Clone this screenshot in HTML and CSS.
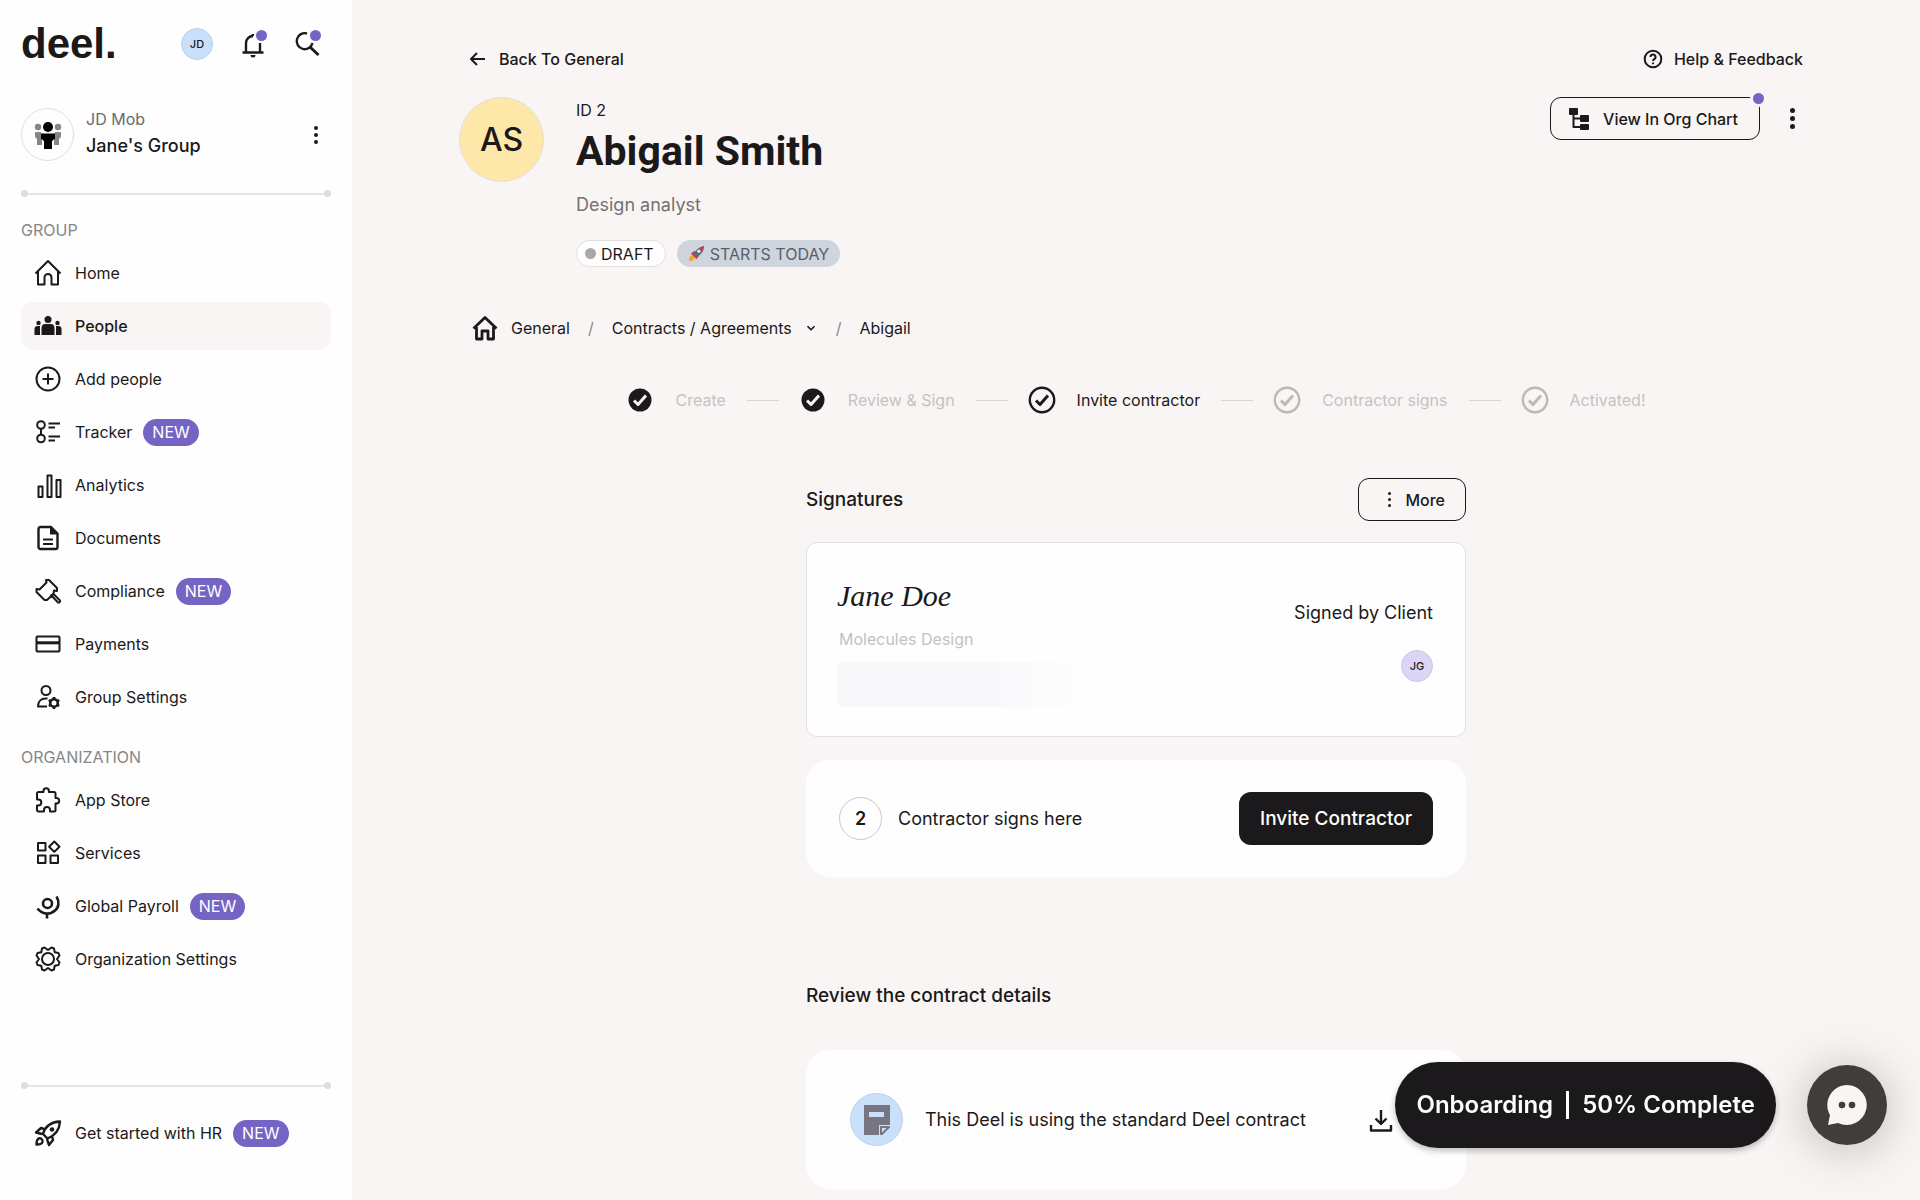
FILE: index.html
```html
<!DOCTYPE html>
<html lang="en">
<head>
    <meta charset="UTF-8">
    <meta name="viewport" content="width=device-width, initial-scale=1.0">
    <title>Abigail Smith - Deel</title>
    <link rel="stylesheet" href="styles.css">
</head>
<body>
    <aside class="sidebar">
        <header class="topbar">
            <a class="logo" href="#">deel.</a>
            <button class="avatar avatar-blue" type="button">JD</button>
            <button class="icon-btn" type="button" aria-label="Notifications">
                <svg class="icon" viewBox="0 0 28 28"><path d="M14 4v2M7 22v-9a7 7 0 0 1 7-7M21 22v-9M3.500 22.500h21" stroke-width="2.400"/><path d="M11.500 25h5a2.500 2.500 0 0 1-5 0z" class="solid"/></svg>
                <span class="dot"></span>
            </button>
            <button class="icon-btn" type="button" aria-label="Search">
                <svg class="icon" viewBox="0 0 28 28"><path d="M14 3.500a8 8 0 1 0 5.500 9.500" stroke-width="2.400"/><path d="M17 17l8.500 8" stroke-width="3"/></svg>
                <span class="dot"></span>
            </button>
        </header>

        <div class="group">
            <span class="group-logo">
                <svg class="icon" viewBox="0 0 28 28"><g class="muted"><circle cx="4" cy="6" r="3.200"/><circle cx="24" cy="6" r="3.200"/><path d="M1 11h6l1 6v7H3v-6l-2-2zM27 11h-6l-1 6v7h5v-6l2-2z"/></g><g class="solid"><circle cx="14" cy="6" r="5"/><path d="M7 12.500h14v5l-3 2.500v8h-8v-8l-3-2.500z"/></g></svg>
            </span>
            <div class="group-text">
                <span class="group-org">JD Mob</span>
                <span class="group-name">Jane's Group</span>
            </div>
            <button class="kebab" type="button" aria-label="Group menu"><i></i><i></i><i></i></button>
        </div>

        <div class="divider"></div>

        <h2 class="nav-title">GROUP</h2>
        <nav class="nav">
            <a class="nav-item" href="#">
                <svg class="icon" viewBox="0 0 28 28"><path d="M1.500 14.500L14 2l12.500 12.500M4 12.500V25.500h6.500v-7a3.500 3.500 0 0 1 7 0v7H24V12.500"/></svg>
                Home
            </a>
            <a class="nav-item active" href="#">
                <svg class="icon" viewBox="0 0 28 28"><g class="solid"><circle cx="14" cy="7.500" r="3.500"/><circle cx="4.500" cy="11" r="2.200"/><circle cx="23.500" cy="11" r="2.200"/><path d="M7.500 23v-7a4 4 0 0 1 4-4h5a4 4 0 0 1 4 4v7zM.5 23v-6a3 3 0 0 1 3-3h2.500v9zM27.500 23v-6a3 3 0 0 0-3-3H22v9z"/></g></svg>
                People
            </a>
            <a class="nav-item" href="#">
                <svg class="icon" viewBox="0 0 28 28"><circle cx="14" cy="14" r="11.500"/><path d="M14 8.500v11M8.500 14h11"/></svg>
                Add people
            </a>
            <a class="nav-item" href="#">
                <svg class="icon" viewBox="0 0 28 28"><circle cx="7" cy="7" r="3.800"/><circle cx="7" cy="20.500" r="3.800"/><path d="M7 11v5.500M14.500 5.500h11.500M14.500 9.500h6.500M14.500 18.500h11.500M14.500 22.500h6.500"/></svg>
                Tracker <span class="badge">NEW</span>
            </a>
            <a class="nav-item" href="#">
                <svg class="icon" viewBox="0 0 28 28"><path d="M4.500 15.500h4V26h-4zM13.500 4.500h4V26h-4zM22.500 9h4v17h-4z"/></svg>
                Analytics
            </a>
            <a class="nav-item" href="#">
                <svg class="icon" viewBox="0 0 28 28"><path d="M6.500 3H17l6.500 6.500V23a2 2 0 0 1-2 2h-15a2 2 0 0 1-2-2V5a2 2 0 0 1 2-2z" stroke-width="2.400"/><path class="solid" d="M16 3v7.500h7.500z"/><path d="M9 15.500h10M9 20h10"/></svg>
                Documents
            </a>
            <a class="nav-item" href="#">
                <svg class="icon" viewBox="0 0 28 28"><path d="M12 3l3 0 8 8v3l-3-.5-.5 3.500-6.500 6-2.500 0L2.500 15v-3l3 .5 7-7zM16.500 17.500l7.500 8c1.500.5 2.500-1 2-2l-7.500-7.500"/></svg>
                Compliance <span class="badge">NEW</span>
            </a>
            <a class="nav-item" href="#">
                <svg class="icon" viewBox="0 0 28 28"><rect x="2.500" y="6.500" width="23" height="15" rx="1"/><path d="M2.500 12.800h23" stroke-width="3"/></svg>
                Payments
            </a>
            <a class="nav-item" href="#">
                <svg class="icon" viewBox="0 0 28 28"><circle cx="12" cy="7.500" r="4.500"/><path d="M13 23.500H4c0-5 3-8 7.500-8h2"/><circle cx="20" cy="20" r="3.800" stroke-width="2.600"/><path d="M20 14v2M20 24v2M14.800 17l1.700 1M23.500 22l1.700 1M14.800 23l1.700-1M23.500 18l1.700-1" stroke-width="2.600"/></svg>
                Group Settings
            </a>
        </nav>

        <h2 class="nav-title">ORGANIZATION</h2>
        <nav class="nav">
            <a class="nav-item" href="#">
                <svg class="icon" viewBox="0 0 28 28"><path d="M4.500 6H9.500V5a2.700 2.700 0 0 1 5.400 0v1H20a1.500 1.500 0 0 1 1.500 1.500V12h1a2.700 2.700 0 0 1 0 5.400h-1v7a1 1 0 0 1-1 1h-4.500V24a3 3 0 0 0-6 0v1.400H4.500a1.500 1.500 0 0 1-1.500-1.500V19.500h1.300a3 3 0 0 0 0-6H3V7.500A1.500 1.500 0 0 1 4.500 6z"/></svg>
                App Store
            </a>
            <a class="nav-item" href="#">
                <svg class="icon" viewBox="0 0 28 28"><path d="M4 4h7.500v7.500H4zM4 16.500h7.500V24H4zM16.500 16.500H24V24h-7.500zM20.300 2.500l5.200 5.200-5.200 5.200-5.200-5.200z"/></svg>
                Services
            </a>
            <a class="nav-item" href="#">
                <svg class="icon" viewBox="0 0 28 28"><circle cx="13.500" cy="11.500" r="4.500" stroke-width="2.600"/><path d="M22.500 4.500c3 5 2.500 11-1.500 14-5 4.500-13 4-17.500-2M13 21.500v5" stroke-width="2.600"/></svg>
                Global Payroll <span class="badge">NEW</span>
            </a>
            <a class="nav-item" href="#">
                <svg class="icon" viewBox="0 0 28 28"><circle cx="14" cy="14" r="6"/><path d="M10.500 2.500L14 5l3.500-2.500 2.500 1 .7 3.800 3.800.7 1 2.500L23 14l2.500 3.500-1 2.500-3.800.7-.7 3.800-2.500 1L14 23l-3.500 2.500-2.500-1-.7-3.800-3.800-.7-1-2.500L5 14l-2.500-3.500 1-2.500 3.800-.7.7-3.800z"/></svg>
                Organization Settings
            </a>
        </nav>

        <footer class="sidebar-foot">
            <div class="divider"></div>
            <a class="nav-item" href="#">
                <svg class="icon" viewBox="0 0 28 28"><g stroke-width="2.400"><path d="M9 15c2-7 7-12 17-12.500C25.500 11 21 16.500 13.500 19.500zM11.500 10.500L7 9l-5 4.500 6 1.500M18 17l1 4-4 5-2-6M4.500 19.500C2.500 21 2.500 25 2.500 25.500c3 0 5.500-.5 6-2.500.5-2.500-2-4.500-4-3.500z"/></g><circle class="solid" cx="18" cy="10.500" r="2.300"/></svg>
                Get started with HR <span class="badge">NEW</span>
            </a>
        </footer>
    </aside>

    <main class="main">
        <div class="page-bar">
            <a class="page-link" href="#">
                <svg class="icon-sm" viewBox="0 0 20 20"><path d="M17 10H3M9 4l-6 6 6 6"/></svg>
                Back To General
            </a>
            <a class="page-link" href="#">
                <svg class="icon-sm" viewBox="0 0 20 20"><circle cx="10" cy="10" r="8.300"/><path d="M7.500 8a2.500 2.500 0 1 1 3.700 2.200c-.8.5-1.200.8-1.200 1.800M10 13.500v1.700"/></svg>
                Help &amp; Feedback
            </a>
        </div>

        <section class="profile">
            <div class="profile-pic">AS</div>
            <div class="profile-info">
                <span class="profile-id">ID 2</span>
                <h1 class="profile-name">Abigail Smith</h1>
                <p class="profile-role">Design analyst</p>
                <div class="tags">
                    <span class="tag tag-draft"><i class="tag-dot"></i>DRAFT</span>
                    <span class="tag tag-start">
                        <svg class="rocket" viewBox="0 0 18 18"><path d="M1 17c0-4 1-6 4-6l2 2c0 3-2 4-6 4z" fill="#f6a623"/><path d="M3 9l4-3 2 2-3 4zM9 15l3-4-2-2-4 3z" fill="#d63a3a"/><path d="M6 11c1-5 5-9 11-10 0 6-4 10-9 12z" fill="#5b6b80"/><path d="M12 4l5-3-2 6z" fill="#d63a3a"/><circle cx="11.500" cy="6.500" r="1.700" fill="#e8f1fb"/></svg>
                        STARTS TODAY
                    </span>
                </div>
            </div>
            <div class="profile-actions">
                <button class="btn-outline" type="button">
                    <svg class="icon-org" viewBox="0 0 24 24"><g class="solid"><rect x="2" y="1" width="9" height="7" rx="1"/><rect x="13" y="8" width="9" height="7" rx="1"/><rect x="13" y="17" width="9" height="6" rx="1"/></g><path d="M6.500 7v13h8M6.500 11.500h8"/></svg>
                    View In Org Chart
                    <span class="dot dot-corner"></span>
                </button>
                <button class="kebab kebab-lg" type="button" aria-label="More actions"><i></i><i></i><i></i></button>
            </div>
        </section>

        <nav class="crumbs">
            <a class="crumb" href="#">
                <svg class="icon" viewBox="0 0 28 28"><path d="M2.500 14.500L14 3.500l11.500 11M5.500 13v12h5.500v-8h6v8h5.500V13" stroke-width="2.800"/></svg>
                General
            </a>
            <span class="slash">/</span>
            <a class="crumb" href="#">
                Contracts / Agreements
                <svg class="chevron" viewBox="0 0 12 12"><path d="M3 4.500l3 3 3-3"/></svg>
            </a>
            <span class="slash">/</span>
            <a class="crumb" href="#">Abigail</a>
        </nav>

        <ol class="steps">
            <li class="step">
                <svg class="icon" viewBox="0 0 28 28"><circle class="solid" cx="14" cy="14" r="11.500"/><path class="tick-light" d="M8 14.500l4 4 8-9"/></svg>
                Create
            </li>
            <li class="step">
                <svg class="icon" viewBox="0 0 28 28"><circle class="solid" cx="14" cy="14" r="11.500"/><path class="tick-light" d="M8 14.500l4 4 8-9"/></svg>
                Review &amp; Sign
            </li>
            <li class="step current">
                <svg class="icon" viewBox="0 0 28 28"><circle cx="14" cy="14" r="12.200" stroke-width="2.400"/><path d="M8 14.500l4 4 8-9" stroke-width="3"/></svg>
                Invite contractor
            </li>
            <li class="step todo">
                <svg class="icon" viewBox="0 0 28 28"><circle cx="14" cy="14" r="12.200" stroke-width="2.400"/><path d="M8 14.500l4 4 8-9" stroke-width="3"/></svg>
                Contractor signs
            </li>
            <li class="step todo">
                <svg class="icon" viewBox="0 0 28 28"><circle cx="14" cy="14" r="12.200" stroke-width="2.400"/><path d="M8 14.500l4 4 8-9" stroke-width="3"/></svg>
                Activated!
            </li>
        </ol>

        <div class="column">
            <div class="section-head">
                <h3 class="section-title">Signatures</h3>
                <button class="btn-outline btn-more" type="button">
                    <span class="kebab kebab-sm"><i></i><i></i><i></i></span>
                    More
                </button>
            </div>

            <div class="card card-signed">
                <div class="signer">
                    <span class="signature">Jane Doe</span>
                    <span class="signer-org">Molecules Design</span>
                    <span class="redacted"></span>
                </div>
                <div class="signed-by">
                    <span>Signed by Client</span>
                    <span class="avatar avatar-lilac">JG</span>
                </div>
            </div>

            <div class="card card-invite">
                <span class="step-number">2</span>
                <span class="card-text">Contractor signs here</span>
                <button class="btn-dark" type="button">Invite Contractor</button>
            </div>

            <h3 class="section-title review-title">Review the contract details</h3>
            <div class="card card-contract">
                <span class="doc-icon">
                    <svg class="doc" viewBox="0 0 26 30"><path d="M0 0h26v20h-11v10H0z" fill="#77757f"/><path d="M5 7h15v5H5z" fill="#cbdff8"/><path d="M17 22h8l-8 8z" fill="#cbdff8" stroke="#77757f"/></svg>
                </span>
                <span class="card-text">This Deel is using the standard Deel contract</span>
                <button class="icon-btn" type="button" aria-label="Download contract">
                    <svg class="icon" viewBox="0 0 28 28"><path d="M14 4v14M8.500 12.500L14 18l5.500-5.500M4 19v5.500h20V19" stroke-width="2.400"/></svg>
                </button>
            </div>
        </div>
    </main>

    <div class="floating">
        <button class="onboarding" type="button">Onboarding <span class="bar"></span> 50% Complete</button>
        <button class="chat" type="button" aria-label="Open chat">
            <svg class="chat-icon" viewBox="0 0 42 42"><path d="M21 1a20 20 0 1 1-9 38l-10 2 2-10A20 20 0 0 1 21 1z" fill="#f9f5f4"/><circle cx="16" cy="21" r="3.300" fill="#423d3d"/><circle cx="26" cy="21" r="3.300" fill="#423d3d"/></svg>
        </button>
    </div>
</body>
</html>
```

FILE: styles.css
```css
* {
    box-sizing: border-box;
}
body {
    margin: 0;
    display: flex;
    min-height: 100vh;
    font-family: Inter, "Liberation Sans", sans-serif;
    font-size: 16px;
    line-height: 24px;
    color: #1b1919;
    background-color: #f9f5f4;
}
a {
    color: inherit;
    text-decoration: none;
}
button {
    font: inherit;
    color: inherit;
    background: none;
    border: 0;
    padding: 0;
    cursor: pointer;
}
h1, h2, h3, p, ol {
    margin: 0;
    padding: 0;
}

/* icons */
svg {
    fill: none;
    stroke: currentColor;
    stroke-width: 2;
    stroke-linejoin: round;
    flex: none;
    display: block;
}
.icon {
    width: 28px;
    height: 28px;
}
.icon-sm {
    width: 20px;
    height: 20px;
}
.icon-org {
    width: 24px;
    height: 24px;
}
.solid {
    fill: currentColor;
    stroke: none;
}
.muted {
    fill: #868686;
    stroke: none;
}
.icon-btn {
    position: relative;
    width: 28px;
    height: 28px;
}
.dot {
    position: absolute;
    top: 0;
    right: 0;
    width: 11px;
    height: 11px;
    border-radius: 50%;
    background-color: #7564c4;
    box-shadow: 0 0 0 2px #fefefe;
}
.kebab {
    display: flex;
    flex-direction: column;
    align-items: center;
    justify-content: center;
    gap: 3px;
    width: 28px;
    height: 28px;
}
.kebab i {
    width: 4px;
    height: 4px;
    border-radius: 50%;
    background-color: currentColor;
}
.avatar {
    display: flex;
    align-items: center;
    justify-content: center;
    width: 32px;
    height: 32px;
    border-radius: 50%;
    font-size: 11px;
    font-weight: 500;
}
.avatar-blue {
    background-color: #c9e0fb;
    border: 1px solid #bcd0ea;
}
.avatar-lilac {
    background-color: #dcd6f6;
    border: 1px solid #cdc6e6;
}

/* sidebar */
.sidebar {
    position: sticky;
    top: 0;
    flex: none;
    display: flex;
    flex-direction: column;
    width: 352px;
    height: 100vh;
    padding: 20px 21px 43px;
    background-color: #fefefe;
}
.topbar {
    display: flex;
    align-items: center;
    gap: 26px;
    height: 48px;
    padding-right: 10px;
}
.logo {
    flex: 1;
    font-family: "Liberation Sans", sans-serif;
    font-size: 42px;
    font-weight: 700;
    line-height: 48px;
}
.group {
    display: flex;
    align-items: center;
    gap: 12px;
    height: 53px;
    margin-top: 40px;
    padding-right: 1px;
}
.group-logo {
    display: flex;
    align-items: center;
    justify-content: center;
    width: 53px;
    height: 53px;
    border: 1px solid #dfdde2;
    border-radius: 50%;
    color: #000;
}
.group-text {
    flex: 1;
    display: flex;
    flex-direction: column;
    padding-bottom: 4px;
}
.group-org {
    line-height: 26px;
    color: #6b6b6b;
}
.group-name {
    font-size: 18px;
    font-weight: 500;
    line-height: 28px;
}
.divider {
    display: flex;
    align-items: center;
    justify-content: space-between;
    height: 7px;
    background: linear-gradient(#e5e3e6, #e5e3e6) center / 100% 2px no-repeat;
}
.divider::before, .divider::after {
    content: "";
    width: 7px;
    height: 7px;
    border-radius: 50%;
    background-color: #dedce0;
}
.group + .divider {
    margin-top: 29px;
}
.nav-title {
    margin-top: 24px;
    font-size: 16px;
    font-weight: 400;
    line-height: 24px;
    color: #868686;
}
.divider + .nav-title {
    margin-top: 21px;
}
.nav {
    display: flex;
    flex-direction: column;
    gap: 5px;
    margin-top: 7px;
}
.nav-item {
    display: flex;
    align-items: center;
    gap: 11px;
    height: 48px;
    padding-left: 13px;
    border-radius: 12px;
}
.nav-item .icon {
    margin-right: 2px;
}
.nav-item.active {
    font-weight: 500;
    background-color: #f9f5f4;
}
.badge {
    padding: 0 9px;
    border-radius: 14px;
    line-height: 27px;
    color: #fff;
    background-color: #7564c4;
}
.sidebar-foot {
    display: flex;
    flex-direction: column;
    gap: 20px;
    margin-top: auto;
}

/* page header */
.main {
    flex: 1;
    min-width: 0;
    padding: 47px 107px 12px;
}
.page-bar {
    display: flex;
    justify-content: space-between;
    padding: 0 10px 0 9px;
}
.page-link {
    display: flex;
    align-items: center;
    gap: 11px;
    font-weight: 500;
}
.profile {
    display: flex;
    align-items: flex-start;
    gap: 32px;
    margin-top: 26px;
}
.profile-pic {
    display: flex;
    align-items: center;
    justify-content: center;
    width: 85px;
    height: 85px;
    border: 1px solid #e4dfd8;
    border-radius: 50%;
    font-size: 32px;
    font-weight: 500;
    background-color: #fee8a9;
}
.profile-info {
    flex: 1;
    display: flex;
    flex-direction: column;
}
.profile-id {
    line-height: 26px;
}
.profile-name {
    font-family: Roboto, "Liberation Sans", sans-serif;
    font-size: 41px;
    font-weight: 700;
    line-height: 56px;
}
.profile-role {
    margin-top: 12px;
    font-size: 18px;
    line-height: 28px;
    color: #757171;
}
.tags {
    display: flex;
    gap: 11px;
    margin-top: 21px;
}
.tag {
    display: flex;
    align-items: center;
    height: 27px;
    padding: 0 11px;
    border-radius: 14px;
}
.tag-draft {
    gap: 5px;
    padding: 0 11px 0 8px;
    border: 1px solid #e2dfe0;
    background-color: #fefefe;
}
.tag-dot {
    width: 11px;
    height: 11px;
    border-radius: 50%;
    background-color: #a9a7a7;
}
.tag-start {
    gap: 5px;
    color: #565f6e;
    background-color: #cfd5dc;
}
.rocket {
    width: 17px;
    height: 17px;
    stroke: none;
}
.profile-actions {
    display: flex;
    align-items: center;
    gap: 11px;
}
.btn-outline {
    position: relative;
    display: flex;
    align-items: center;
    gap: 12px;
    height: 43px;
    padding: 0 21px 0 16px;
    border: 1px solid #1b1919;
    border-radius: 11px;
    font-weight: 500;
}
.dot-corner {
    top: -5px;
    right: -5px;
    box-shadow: 0 0 0 3px #f9f5f4;
}
.kebab-lg {
    width: 42px;
    height: 42px;
}
.kebab-lg i {
    width: 5px;
    height: 5px;
}
.crumbs {
    display: flex;
    align-items: center;
    gap: 18px;
    height: 30px;
    margin-top: 46px;
    padding-left: 12px;
}
.crumb {
    display: flex;
    align-items: center;
    gap: 12px;
}
.slash {
    color: #8c8888;
}
.chevron {
    width: 14px;
    height: 14px;
    stroke-width: 1.5;
}

/* progress */
.steps {
    display: flex;
    justify-content: center;
    gap: 20px;
    margin-top: 43px;
    list-style: none;
}
.step {
    display: flex;
    align-items: center;
    gap: 21px;
    color: #c6c2c2;
}
.step:not(:last-child)::after {
    content: "";
    width: 32px;
    height: 1px;
    background-color: #d9d5d5;
}
.step .icon {
    color: #1b1919;
}
.step.current {
    color: #1b1919;
}
.step.todo .icon {
    color: #bdb9b9;
}
.tick-light {
    stroke: #f9f5f4;
    stroke-width: 3;
}

/* contract column */
.column {
    max-width: 660px;
    margin: 64px auto 0;
}
.section-head {
    display: flex;
    align-items: center;
    justify-content: space-between;
}
.section-title {
    font-size: 19px;
    font-weight: 500;
    line-height: 28px;
}
.btn-more {
    gap: 2px;
    padding: 0 20px 0 16px;
}
.kebab-sm i {
    width: 3px;
    height: 3px;
}
.card {
    display: flex;
    border-radius: 24px;
    background-color: #fefefe;
    font-size: 18px;
}
.card-signed {
    justify-content: space-between;
    margin-top: 21px;
    padding: 31px 32px 29px 30px;
    border: 1px solid #e3e0e3;
    border-radius: 11px;
}
.signer {
    display: flex;
    flex-direction: column;
}
.signature {
    font-family: "Liberation Serif", serif;
    font-size: 30px;
    font-style: italic;
    line-height: 44px;
}
.signer-org {
    margin-top: 8px;
    padding-left: 2px;
    font-size: 16px;
    line-height: 26px;
    color: #c4c1c5;
}
.redacted {
    width: 250px;
    height: 45px;
    margin-top: 10px;
    border-radius: 6px;
    background: linear-gradient(to right, #f8f7fa 60%, #fefefe);
}
.signed-by {
    display: flex;
    flex-direction: column;
    align-items: flex-end;
    gap: 24px;
    padding-top: 26px;
    line-height: 26px;
}
.card-invite {
    align-items: center;
    gap: 16px;
    margin-top: 23px;
    padding: 32px 33px;
}
.step-number {
    display: flex;
    align-items: center;
    justify-content: center;
    width: 43px;
    height: 43px;
    border: 1px solid #c9c7ca;
    border-radius: 50%;
    font-weight: 600;
}
.card-text {
    flex: 1;
}
.btn-dark {
    height: 53px;
    padding: 0 21px;
    border-radius: 12px;
    font-size: 19px;
    font-weight: 500;
    color: #fefefe;
    background-color: #1b191b;
}
.review-title {
    margin-top: 105px;
}
.card-contract {
    align-items: center;
    gap: 22px;
    margin-top: 40px;
    padding: 43px 71px 43px 44px;
}
.doc-icon {
    display: flex;
    align-items: center;
    justify-content: center;
    width: 53px;
    height: 53px;
    border: 1px solid #bfcfe6;
    border-radius: 50%;
    background-color: #c9e0fb;
}
.doc {
    width: 26px;
    height: 30px;
    stroke: none;
}

/* widgets over the page */
.floating {
    position: fixed;
    right: 33px;
    bottom: 52px;
    display: flex;
    align-items: center;
    gap: 31px;
}
.onboarding {
    display: flex;
    align-items: center;
    gap: 13px;
    height: 86px;
    padding: 0 21px;
    border-radius: 43px;
    font-size: 24px;
    font-weight: 600;
    color: #fefefe;
    background-color: #1b191b;
    box-shadow: 0 3px 6px rgba(0, 0, 0, 0.25);
}
.bar {
    width: 3px;
    height: 28px;
    background-color: #fefefe;
}
.chat {
    display: flex;
    align-items: center;
    justify-content: center;
    width: 80px;
    height: 80px;
    border-radius: 50%;
    background-color: #423d3d;
    box-shadow: 0 4px 48px rgba(0, 0, 0, 0.25);
}
.chat-icon {
    width: 42px;
    height: 42px;
    stroke: none;
}
```
